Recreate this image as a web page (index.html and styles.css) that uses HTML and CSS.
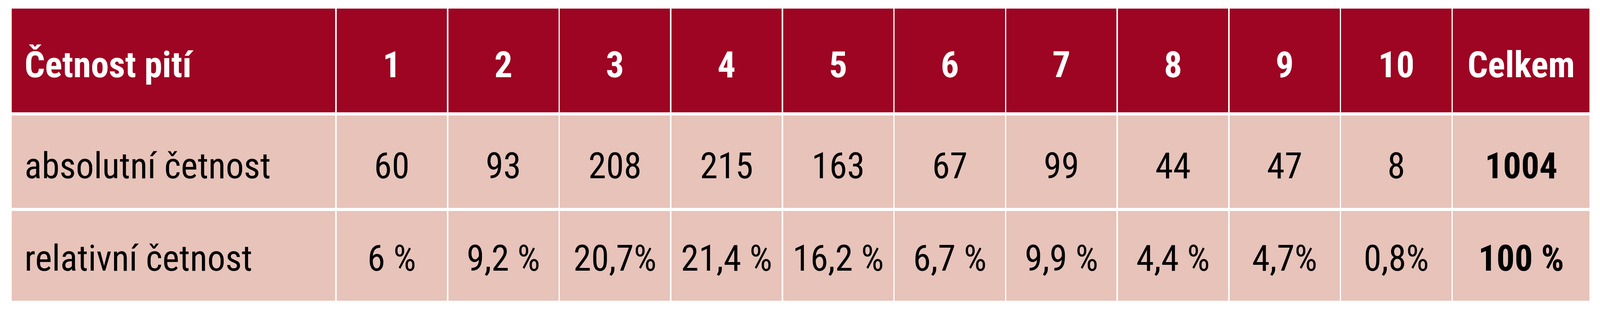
FILE: index.html
```html
<!DOCTYPE html>
<html lang="cs">
<head>
<meta charset="utf-8">
<title>Četnost pití</title>
<link rel="stylesheet" href="styles.css">
</head>
<body>
<div class="freq-table">
  <div class="cell head label">Četnost pití</div>
  <div class="cell head">1</div>
  <div class="cell head">2</div>
  <div class="cell head">3</div>
  <div class="cell head">4</div>
  <div class="cell head">5</div>
  <div class="cell head">6</div>
  <div class="cell head">7</div>
  <div class="cell head">8</div>
  <div class="cell head">9</div>
  <div class="cell head">10</div>
  <div class="cell head">Celkem</div>

  <div class="cell abs label">absolutní četnost</div>
  <div class="cell abs">60</div>
  <div class="cell abs">93</div>
  <div class="cell abs">208</div>
  <div class="cell abs">215</div>
  <div class="cell abs">163</div>
  <div class="cell abs">67</div>
  <div class="cell abs">99</div>
  <div class="cell abs">44</div>
  <div class="cell abs">47</div>
  <div class="cell abs">8</div>
  <div class="cell abs total">1004</div>

  <div class="cell rel label">relativní četnost</div>
  <div class="cell rel">6 %</div>
  <div class="cell rel">9,2 %</div>
  <div class="cell rel">20,7%</div>
  <div class="cell rel">21,4 %</div>
  <div class="cell rel">16,2 %</div>
  <div class="cell rel">6,7 %</div>
  <div class="cell rel">9,9 %</div>
  <div class="cell rel">4,4 %</div>
  <div class="cell rel">4,7%</div>
  <div class="cell rel">0,8%</div>
  <div class="cell rel total">100 %</div>
</div>
</body>
</html>
```
FILE: styles.css
```css
html, body {
  margin: 0;
  padding: 0;
  background: #ffffff;
}

body {
  font-family: "Roboto Condensed", "DejaVu Sans Condensed", sans-serif;
  font-size: 92px;
  line-height: 1;
  color: #000000;
}

.freq-table {
  margin: 22px 0.6536vw 0 0.7416vw;
  display: grid;
  grid-template-columns: 1608fr repeat(10, 548fr) 680fr;
  grid-template-rows: 266px 237px 230px;
  column-gap: 0.088vw;
  row-gap: 8px;
}

.cell {
  display: flex;
  align-items: center;
  justify-content: center;
  white-space: nowrap;
  background: #e7c3b9;
  min-width: 0;
}

.cell.label {
  justify-content: flex-start;
  padding-left: 0.792vw;
}

.head {
  background: #9d0522;
  color: #ffffff;
  font-weight: 700;
  padding-top: 24px;
}

.abs {
  padding-top: 23px;
}

.rel {
  padding-top: 14px;
}

.total {
  font-weight: 700;
}
```
